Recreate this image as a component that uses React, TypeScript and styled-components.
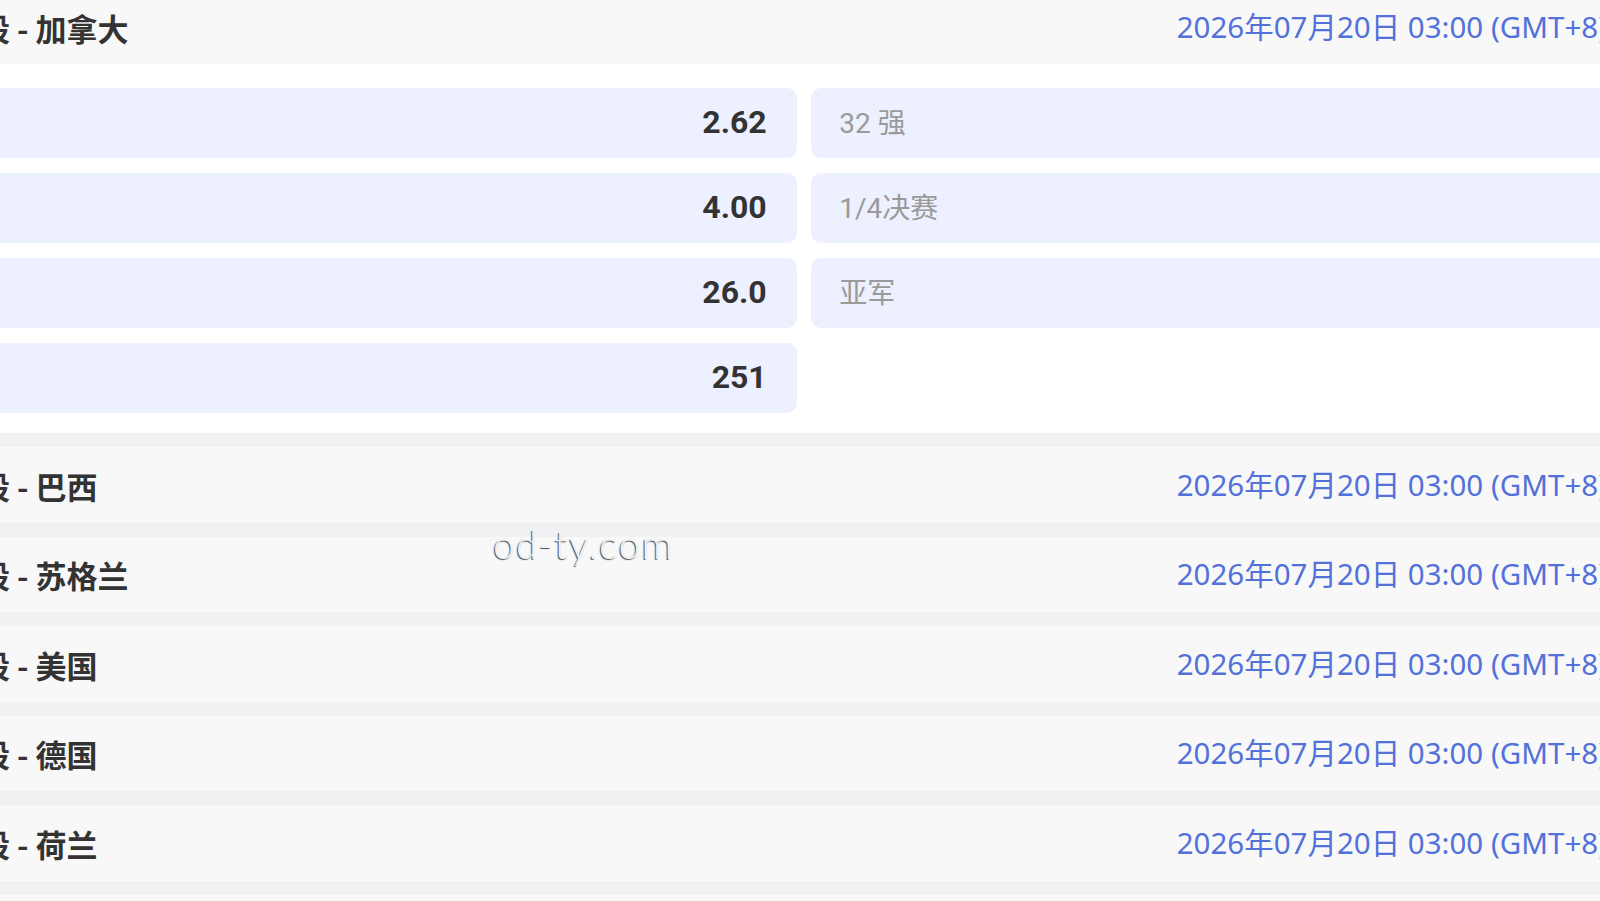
import styled, { createGlobalStyle } from "styled-components";
import { ChevronDown, ChevronUp } from "lucide-react";

type Odd = {
  label: string;
  price: string;
};

type Match = {
  team: string;
  time: string;
  odds?: Odd[];
};

const matches: Match[] = [
  {
    team: "加拿大",
    time: "2026年07月20日 03:00 (GMT+8)",
    odds: [
      { label: "小组赛", price: "2.62" },
      { label: "32 强", price: "3.40" },
      { label: "16 强", price: "4.00" },
      { label: "1/4决赛", price: "9.50" },
      { label: "半决赛", price: "26.0" },
      { label: "亚军", price: "67.0" },
      { label: "冠军", price: "251" },
    ],
  },
  { team: "巴西", time: "2026年07月20日 03:00 (GMT+8)" },
  { team: "苏格兰", time: "2026年07月20日 03:00 (GMT+8)" },
  { team: "美国", time: "2026年07月20日 03:00 (GMT+8)" },
  { team: "德国", time: "2026年07月20日 03:00 (GMT+8)" },
  { team: "荷兰", time: "2026年07月20日 03:00 (GMT+8)" },
  { team: "英格兰", time: "2026年07月20日 03:00 (GMT+8)" },
];

function App() {
  return (
    <>
      <GlobalStyle />
      <Viewport>
        <Board>
          {matches.map((m, i) => (
            <MatchCard key={m.team}>
              <MatchHeader first={i === 0}>
                <Title>淘汰阶段 - {m.team}</Title>
                <Meta>
                  <DateText>{m.time}</DateText>
                  <Toggle>
                    {m.odds ? <ChevronUp size={28} /> : <ChevronDown size={28} />}
                  </Toggle>
                </Meta>
              </MatchHeader>
              {m.odds ? (
                <OddsGrid>
                  {m.odds.map((o) => (
                    <OddCell key={o.label}>
                      <OddLabel>{o.label}</OddLabel>
                      <OddPrice>{o.price}</OddPrice>
                    </OddCell>
                  ))}
                </OddsGrid>
              ) : null}
            </MatchCard>
          ))}
        </Board>
        <Watermark>od-ty.com</Watermark>
      </Viewport>
    </>
  );
}

const GlobalStyle = createGlobalStyle`
  html, body {
    margin: 0;
    padding: 0;
    background: #ffffff;
    overflow: hidden;
  }
  body {
    font-family: Roboto, "Noto Sans CJK SC", sans-serif;
  }
`;

const Viewport = styled.div`
  position: relative;
  width: 1600px;
  height: 901px;
  overflow: hidden;
  background: #f1f1f3;
`;

const Board = styled.div`
  display: flex;
  flex-direction: column;
  gap: 14px;
  width: 1888px;
  margin-left: -140px;
  margin-top: -10px;
`;

const MatchCard = styled.section`
  display: flex;
  flex-direction: column;
  background: #ffffff;
`;

const MatchHeader = styled.div<{ first?: boolean }>`
  display: flex;
  align-items: center;
  justify-content: space-between;
  height: ${(props) => (props.first ? "74px" : "75.5px")};
  padding: 1px 28px 0 26px;
  box-sizing: border-box;
  background: #f8f8f8;
`;

const Title = styled.div`
  font-family: "Noto Sans CJK SC", sans-serif;
  font-size: 31px;
  font-weight: 700;
  color: #333333;
  white-space: nowrap;
`;

const Meta = styled.div`
  display: flex;
  align-items: center;
  gap: 85px;
`;

const DateText = styled.span`
  font-family: "Noto Sans", "Noto Sans CJK SC", sans-serif;
  font-size: 29.5px;
  color: #5271d9;
  white-space: nowrap;
  margin-bottom: 4px;
`;

const Toggle = styled.span`
  display: flex;
  color: #999999;
`;

const OddsGrid = styled.div`
  display: grid;
  grid-template-columns: 1fr 1fr;
  column-gap: 14.6px;
  row-gap: 15px;
  padding: 24px 28px 20px;
`;

const OddCell = styled.div`
  display: flex;
  align-items: center;
  justify-content: space-between;
  height: 70px;
  padding: 0 30px 0 28px;
  box-sizing: border-box;
  background: #edf0fe;
  border-radius: 10px;
`;

const OddLabel = styled.span`
  font-family: Roboto, "Noto Sans CJK SC", sans-serif;
  font-size: 28px;
  color: #9a9a9a;
  white-space: nowrap;
  margin-bottom: 4px;
`;

const OddPrice = styled.span`
  font-family: Roboto, sans-serif;
  font-size: 32px;
  font-weight: 700;
  color: #333333;
  margin-bottom: 2px;
`;

const Watermark = styled.div`
  position: absolute;
  left: 493px;
  top: 521px;
  font-family: Lato, sans-serif;
  font-weight: 300;
  font-size: 38.5px;
  letter-spacing: 1.5px;
  color: #f2f2f2;
  text-shadow: -1px 1px 1px rgba(0, 0, 0, 0.7);
  pointer-events: none;
`;

export default App;
